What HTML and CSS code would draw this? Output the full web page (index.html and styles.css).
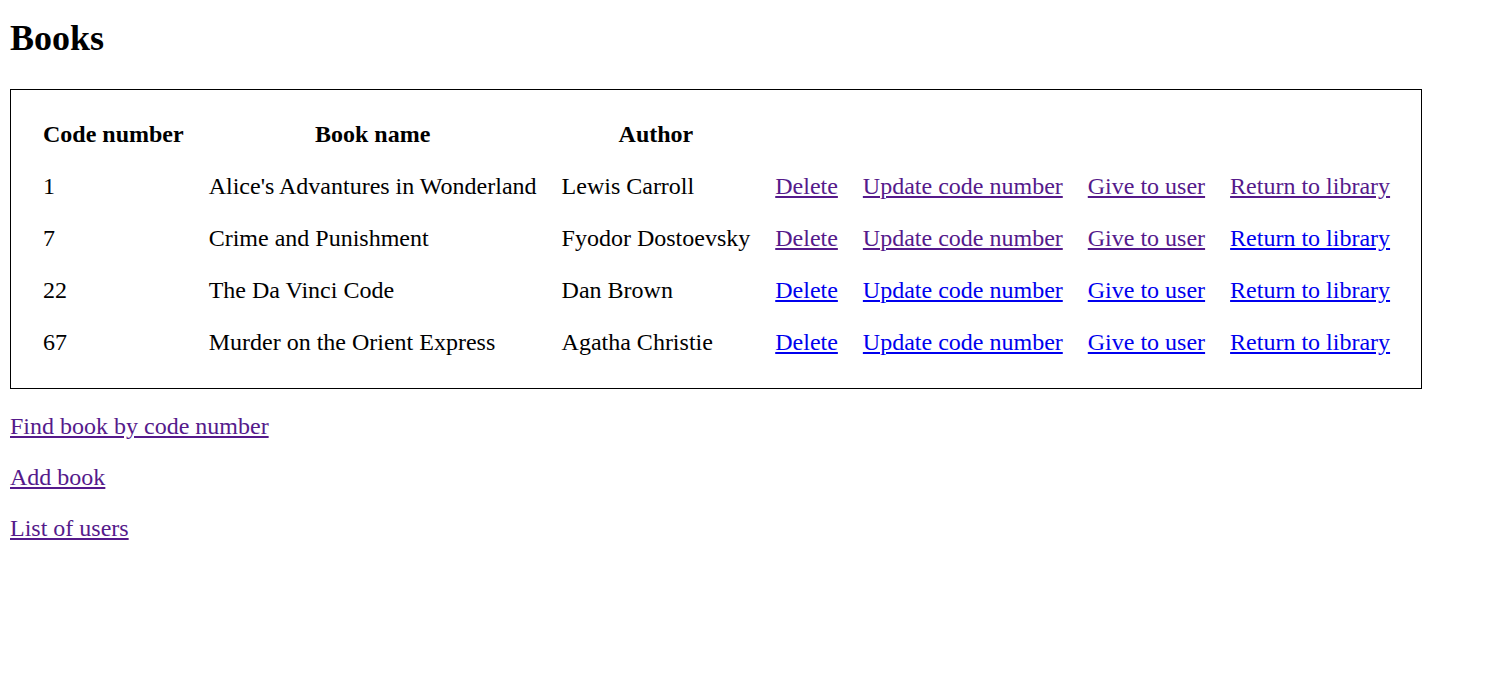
FILE: index.html
```html
<!DOCTYPE html>
<html>
<head>
<meta charset="utf-8">
<title>Books</title>
<link rel="stylesheet" href="styles.css">
</head>
<body>
<h1 class="title">Books</h1>
<table class="books">
  <thead>
    <tr><th>Code number</th><th>Book name</th><th>Author</th><th></th><th></th><th></th><th></th></tr>
  </thead>
  <tbody>
    <tr><td>1</td><td>Alice's Advantures in Wonderland</td><td>Lewis Carroll</td>
      <td><a class="link visited" href="#">Delete</a></td><td><a class="link visited" href="#">Update code number</a></td><td><a class="link visited" href="#">Give to user</a></td><td><a class="link visited" href="#">Return to library</a></td></tr>
    <tr><td>7</td><td>Crime and Punishment</td><td>Fyodor Dostoevsky</td>
      <td><a class="link visited" href="#">Delete</a></td><td><a class="link visited" href="#">Update code number</a></td><td><a class="link visited" href="#">Give to user</a></td><td><a class="link fresh" href="#">Return to library</a></td></tr>
    <tr><td>22</td><td>The Da Vinci Code</td><td>Dan Brown</td>
      <td><a class="link fresh" href="#">Delete</a></td><td><a class="link fresh" href="#">Update code number</a></td><td><a class="link fresh" href="#">Give to user</a></td><td><a class="link fresh" href="#">Return to library</a></td></tr>
    <tr><td>67</td><td>Murder on the Orient Express</td><td>Agatha Christie</td>
      <td><a class="link fresh" href="#">Delete</a></td><td><a class="link fresh" href="#">Update code number</a></td><td><a class="link fresh" href="#">Give to user</a></td><td><a class="link fresh" href="#">Return to library</a></td></tr>
  </tbody>
</table>
<div class="nav">
  <a class="link visited" href="#">Find book by code number</a>
  <a class="link visited" href="#">Add book</a>
  <a class="link visited" href="#">List of users</a>
</div>
</body>
</html>
```
FILE: styles.css
```css
html, body {
  background: #fff;
}
body {
  margin: 0;
  padding: 10px;
  font-family: "Liberation Serif", "Times New Roman", serif;
  font-size: 24px;
  color: #000;
}
.title {
  font-size: 36px;
  line-height: 41px;
  font-weight: bold;
  margin: 8px 0 30px;
}
.books {
  border: 1px solid #000;
  border-collapse: separate;
  border-spacing: 0;
  padding: 18px 18.5px 20px 19.5px;
}
.books th,
.books td {
  padding: 12.5px 12.5px;
  line-height: 27px;
  white-space: nowrap;
}
.books th {
  text-align: center;
  font-weight: bold;
}
.books td {
  text-align: left;
}
.link {
  text-decoration: underline;
}
.visited {
  color: #551a8b;
}
.fresh {
  color: #0000ee;
}
.nav {
  display: flex;
  flex-direction: column;
  align-items: flex-start;
  gap: 24px;
  margin-top: 23.5px;
  line-height: 27px;
}
```
